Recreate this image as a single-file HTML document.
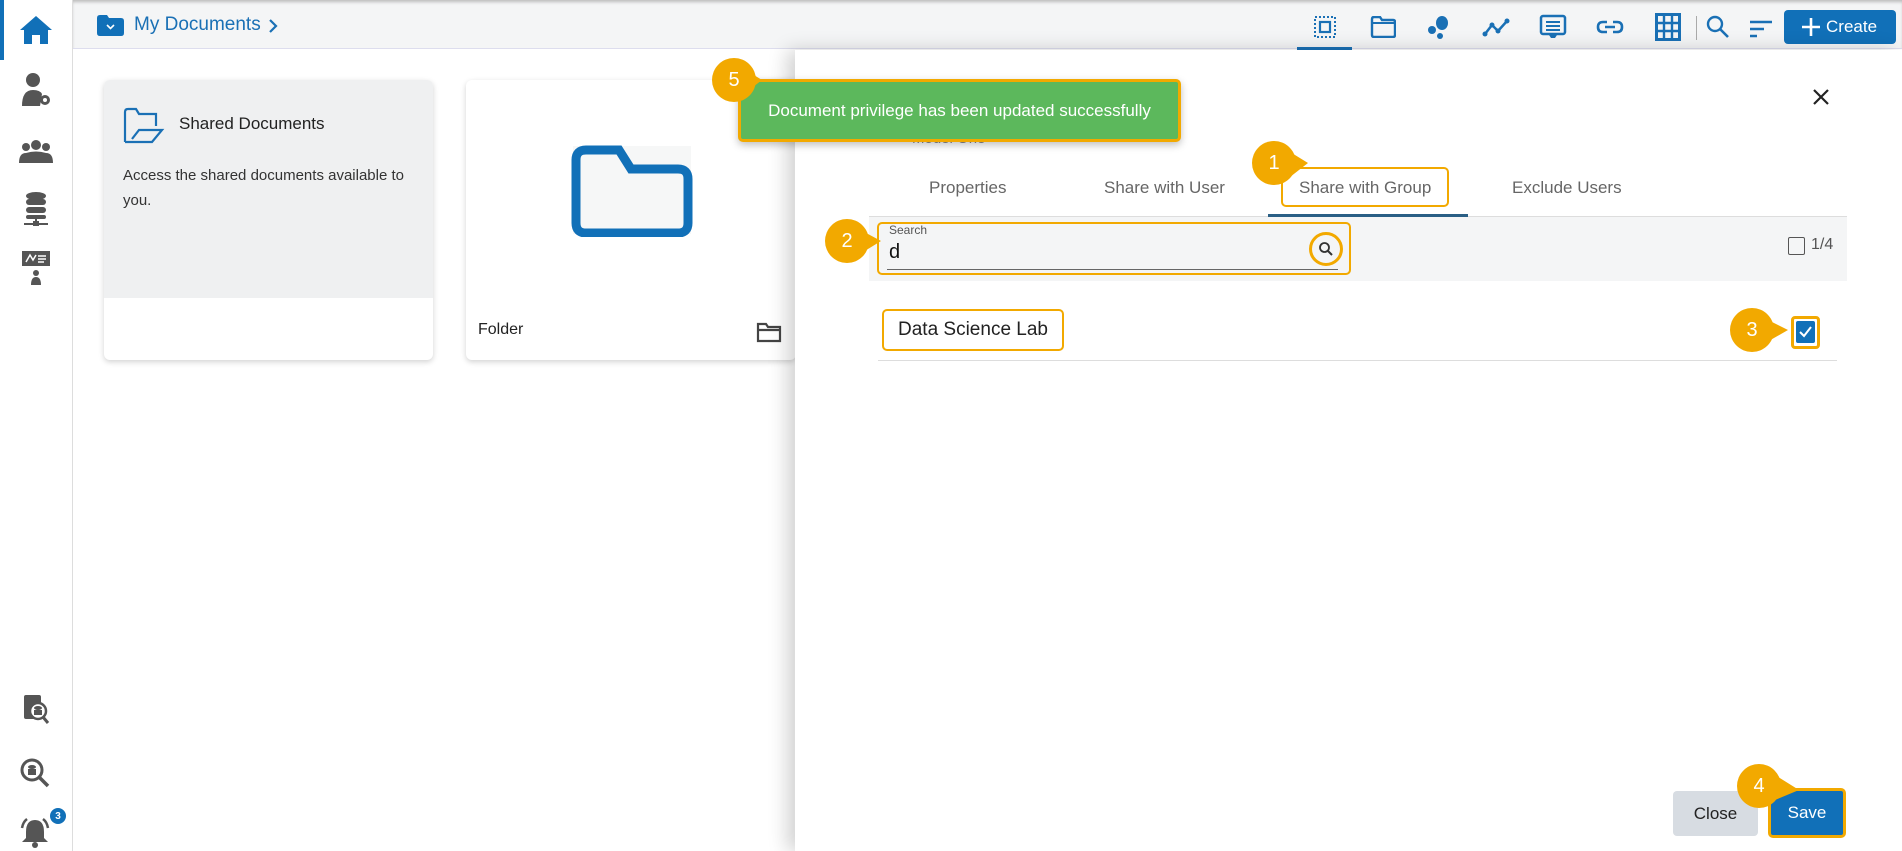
<!DOCTYPE html>
<html><head><meta charset="utf-8"><style>
*{box-sizing:border-box;margin:0;padding:0}
body{width:1902px;height:851px;overflow:hidden;background:#fff;font-family:"Liberation Sans",sans-serif;position:relative;color:#222}
.abs{position:absolute}
.side{left:0;top:0;width:73px;height:851px;background:#fff;border-right:1px solid #ddd}
.top{left:73px;top:0;width:1829px;height:49px;background:#f4f5f6;border-bottom:1px solid #dde;box-shadow:inset 0 3px 3px -1px #bbb}
.card{background:#fff;border-radius:6px;box-shadow:0 2px 6px rgba(0,0,0,.18);overflow:hidden}
.badge{width:44px;height:44px;border-radius:50%;background:#f2a900;color:#fff;font-size:20px;display:flex;align-items:center;justify-content:center}
.hl{border:2px solid #f2a900;border-radius:5px}
.ic{position:absolute;transform:translate(-50%,-50%)}
</style></head><body>
<div class="abs side"></div>
<div class="abs" style="left:0;top:0;width:4px;height:60px;background:#1170b8"></div>
<svg class="ic" style="left:36px;top:30px" width="34" height="32" viewBox="0 0 34 32"><path d="M17 2 L1 16 L5 16 L5 30 L13 30 L13 21 L21 21 L21 30 L29 30 L29 16 L33 16 Z" fill="#1170b8"/></svg>
<svg class="ic" style="left:36px;top:90px" width="32" height="36" viewBox="0 0 32 36"><circle cx="13" cy="8" r="7" fill="#555"/><path d="M2 34 Q2 18 13 18 Q20 18 22 22 L20 34Z" fill="#555"/><circle cx="25" cy="28" r="5" fill="#555"/><circle cx="25" cy="28" r="2" fill="#fff"/></svg>
<svg class="ic" style="left:36px;top:152px" width="36" height="26" viewBox="0 0 36 26"><circle cx="8" cy="8" r="4" fill="#555"/><circle cx="18" cy="6" r="5" fill="#555"/><circle cx="28" cy="8" r="4" fill="#555"/><path d="M1 24 Q1 14 8 14 Q18 11 28 14 Q35 14 35 24Z" fill="#555"/></svg>
<svg class="ic" style="left:36px;top:209px" width="26" height="36" viewBox="0 0 26 36"><ellipse cx="13" cy="5" rx="10" ry="4" fill="#555"/><rect x="3" y="8" width="20" height="6" rx="3" fill="#555"/><rect x="3" y="16" width="20" height="6" rx="3" fill="#555"/><rect x="3" y="24" width="20" height="4" rx="2" fill="#555"/><rect x="12" y="28" width="2" height="5" fill="#555"/><rect x="1" y="32" width="24" height="2" fill="#555"/><rect x="10" y="30" width="6" height="5" fill="#555"/></svg>
<svg class="ic" style="left:36px;top:268px" width="30" height="36" viewBox="0 0 30 36"><rect x="1" y="1" width="28" height="15" fill="#555"/><path d="M5 12 L9 5 L12 10 L15 5 M17 6 H25 M17 9 H25 M17 12 H23" stroke="#fff" stroke-width="1.5" fill="none"/><circle cx="15" cy="23" r="3" fill="#555"/><path d="M10 35 Q10 27 15 27 Q20 27 20 35Z" fill="#555"/></svg>
<svg class="ic" style="left:36px;top:710px" width="30" height="32" viewBox="0 0 30 32"><rect x="3" y="1" width="17" height="24" rx="2" fill="#555"/><circle cx="17" cy="17" r="8" fill="#fff" stroke="#555" stroke-width="2.5"/><ellipse cx="17" cy="14" rx="4" ry="2" fill="#555"/><rect x="13" y="16" width="8" height="5" fill="#555"/><path d="M22 23 L27 29" stroke="#555" stroke-width="3"/></svg>
<svg class="ic" style="left:35px;top:773px" width="32" height="32" viewBox="0 0 32 32"><circle cx="13" cy="13" r="10" fill="none" stroke="#555" stroke-width="3"/><ellipse cx="13" cy="10" rx="4" ry="2" fill="#555"/><rect x="9" y="12" width="8" height="6" fill="#555"/><path d="M20 20 L29 29" stroke="#555" stroke-width="3.5"/></svg>
<svg class="ic" style="left:35px;top:832px" width="34" height="32" viewBox="0 0 34 32"><path d="M17 4 Q8 4 8 16 L8 22 L4 26 L30 26 L26 22 L26 16 Q26 4 17 4Z" fill="#555"/><circle cx="17" cy="29" r="3" fill="#555"/><path d="M4 12 Q5 6 9 3 M30 12 Q29 6 25 3" stroke="#555" stroke-width="2.5" fill="none"/></svg>
<div class="abs" style="left:50px;top:808px;width:16px;height:16px;border-radius:50%;background:#1170b8;color:#fff;font-size:10px;font-weight:bold;display:flex;align-items:center;justify-content:center">3</div>

<div class="abs top"></div>
<svg class="abs" style="left:97px;top:15px" width="27" height="21" viewBox="0 0 27 21"><path d="M0 3 Q0 0 3 0 L10 0 L12 3 L24 3 Q27 3 27 6 L27 18 Q27 21 24 21 L3 21 Q0 21 0 18Z" fill="#1170b8"/><path d="M10 10 L13.5 13.5 L17 10" stroke="#fff" stroke-width="1.6" fill="none"/></svg>
<div class="abs" style="left:134px;top:14px;font-size:19px;color:#1a70b5">My Documents</div>
<svg class="abs" style="left:268px;top:19px" width="10" height="14" viewBox="0 0 10 14"><path d="M2 1 L8 7 L2 13" stroke="#1a70b5" stroke-width="2.2" fill="none"/></svg>
<svg class="ic" style="left:1325px;top:27px" width="24" height="24" viewBox="0 0 24 24"><rect x="2" y="2" width="20" height="20" fill="none" stroke="#1a70b5" stroke-width="2" stroke-dasharray="2 2"/><rect x="7" y="7" width="10" height="10" fill="none" stroke="#1a70b5" stroke-width="2.2"/></svg>
<div class="abs" style="left:1297px;top:47px;width:55px;height:3px;background:#1a70b5"></div>
<svg class="ic" style="left:1383px;top:27px" width="26" height="22" viewBox="0 0 26 22"><path d="M2 3 Q2 1 4 1 L10 1 L12 4 L23 4 Q25 4 25 6 L25 19 Q25 21 23 21 L4 21 Q2 21 2 19Z" fill="none" stroke="#1a70b5" stroke-width="2.4"/><path d="M2 7 L25 7" stroke="#1a70b5" stroke-width="2"/></svg>
<svg class="ic" style="left:1439px;top:27px" width="24" height="24" viewBox="0 0 24 24"><ellipse cx="15" cy="8" rx="6" ry="7" fill="#1a70b5"/><circle cx="5" cy="15" r="4" fill="#1a70b5"/><circle cx="13" cy="21" r="3" fill="#1a70b5"/></svg>
<svg class="ic" style="left:1496px;top:27px" width="28" height="20" viewBox="0 0 28 20"><path d="M3 17 L10 8 L16 14 L25 4" stroke="#1a70b5" stroke-width="2.5" fill="none"/><circle cx="3" cy="17" r="2.5" fill="#1a70b5"/><circle cx="10" cy="8" r="2.5" fill="#1a70b5"/><circle cx="16" cy="14" r="2.5" fill="#1a70b5"/><circle cx="25" cy="4" r="2.5" fill="#1a70b5"/></svg>
<svg class="ic" style="left:1553px;top:27px" width="28" height="26" viewBox="0 0 28 26"><rect x="2" y="2" width="24" height="18" rx="2" fill="none" stroke="#1a70b5" stroke-width="2.5"/><path d="M7 8 H21 M7 12 H21 M7 16 H21" stroke="#1a70b5" stroke-width="2"/><path d="M10 21 H18 L16 24 H12Z" fill="#1a70b5"/></svg>
<svg class="ic" style="left:1610px;top:27px" width="28" height="16" viewBox="0 0 28 16"><path d="M11 3 H7 Q2 3 2 8 Q2 13 7 13 H11 M17 3 H21 Q26 3 26 8 Q26 13 21 13 H17 M9 8 H19" stroke="#1a70b5" stroke-width="2.6" fill="none"/></svg>
<svg class="ic" style="left:1668px;top:27px" width="26" height="28" viewBox="0 0 26 28"><rect x="1.5" y="1.5" width="23" height="25" fill="none" stroke="#1a70b5" stroke-width="3"/><path d="M9 1 V27 M17 1 V27 M1 10 H25 M1 18 H25" stroke="#1a70b5" stroke-width="2.4"/></svg>
<div class="abs" style="left:1696px;top:16px;width:1px;height:24px;background:#aaa"></div>
<svg class="ic" style="left:1718px;top:27px" width="24" height="24" viewBox="0 0 24 24"><circle cx="9" cy="9" r="7" fill="none" stroke="#1a70b5" stroke-width="2.4"/><path d="M14 14 L22 22" stroke="#1a70b5" stroke-width="2.6"/></svg>
<svg class="ic" style="left:1761px;top:29px" width="24" height="20" viewBox="0 0 24 20"><path d="M1 3 H23 M1 10 H15 M1 17 H8" stroke="#1a70b5" stroke-width="2.6"/></svg>
<div class="abs" style="left:1784px;top:10px;width:112px;height:34px;background:#1170b8;border-radius:4px;color:#fff;font-size:17px;display:flex;align-items:center;padding-left:42px">Create</div>
<svg class="abs" style="left:1800px;top:16px" width="22" height="22" viewBox="0 0 22 22"><path d="M11 2 V20 M2 11 H20" stroke="#fff" stroke-width="2.6"/></svg>

<div class="abs card" style="left:104px;top:80px;width:329px;height:280px">
 <div style="height:218px;background:#eff0f1"></div>
</div>
<svg class="abs" style="left:122px;top:106px" width="44" height="38" viewBox="0 0 44 38"><path d="M3 36 L3 6 Q3 3 6 3 L14 3 L17 8 L34 8 L34 20 M3 36 L30 36 L40 24 L17 24 L10 33" stroke="#1a70b5" stroke-width="2.2" fill="none"/></svg>
<div class="abs" style="left:179px;top:114px;font-size:17px;color:#222">Shared Documents</div>
<div class="abs" style="left:123px;top:163px;font-size:15px;color:#333;line-height:25px;width:300px">Access the shared documents available to you.</div>
<div class="abs card" style="left:466px;top:80px;width:330px;height:280px"></div>
<div class="abs" style="left:573px;top:146px;width:118px;height:88px;background:#f6f7f7"></div>
<svg class="abs" style="left:571px;top:145px" width="122" height="92" viewBox="0 0 122 92"><path d="M5 15 Q5 5 15 5 L48 5 L60 24 L107 24 Q117 24 117 34 L117 78 Q117 88 107 88 L15 88 Q5 88 5 78Z" fill="none" stroke="#1170b8" stroke-width="9"/></svg>
<div class="abs" style="left:478px;top:321px;font-size:16px;color:#222">Folder</div>
<svg class="abs" style="left:756px;top:321px" width="26" height="22" viewBox="0 0 26 22"><path d="M2 3 L10 3 L12 6 L24 6 L24 20 L2 20Z M2 9 H24" fill="none" stroke="#444" stroke-width="2.2"/></svg>

<div class="abs" style="left:795px;top:50px;width:1107px;height:801px;background:#fff;box-shadow:-8px 0 18px rgba(0,0,0,.18)"></div>
<svg class="abs" style="left:1812px;top:88px" width="18" height="18" viewBox="0 0 18 18"><path d="M2 2 L16 16 M16 2 L2 16" stroke="#222" stroke-width="2.2"/></svg>
<div class="abs" style="left:912px;top:130px;font-size:15px;color:#888">Model One</div>
<div class="abs" style="left:869px;top:178px;width:978px;font-size:17px;color:#666">
 <span class="abs" style="left:60px;top:0">Properties</span>
 <span class="abs" style="left:235px;top:0">Share with User</span>
 <span class="abs" style="left:430px;top:0">Share with Group</span>
 <span class="abs" style="left:643px;top:0">Exclude Users</span>
</div>
<div class="abs hl" style="left:1281px;top:167px;width:168px;height:40px"></div>
<div class="abs" style="left:869px;top:216px;width:978px;height:1px;background:#ddd"></div>
<div class="abs" style="left:1268px;top:214px;width:200px;height:3px;background:#2a5f85"></div>
<div class="abs" style="left:869px;top:217px;width:978px;height:64px;background:#f4f5f6"></div>
<div class="abs hl" style="left:877px;top:222px;width:474px;height:53px"></div>
<div class="abs" style="left:889px;top:223px;font-size:12px;color:#555">Search</div>
<div class="abs" style="left:889px;top:241px;font-size:20px;color:#111">d</div>
<div class="abs" style="left:887px;top:269px;width:451px;height:1px;background:#666"></div>
<div class="abs" style="left:1309px;top:232px;width:34px;height:34px;border:3px solid #f2a900;border-radius:50%"></div>
<svg class="abs" style="left:1318px;top:241px" width="16" height="16" viewBox="0 0 16 16"><circle cx="6.5" cy="6.5" r="4.5" fill="none" stroke="#333" stroke-width="1.8"/><path d="M10 10 L14 14" stroke="#333" stroke-width="2"/></svg>
<div class="abs" style="left:1788px;top:237px;width:17px;height:18px;border:1.6px solid #555;border-radius:2px"></div>
<div class="abs" style="left:1811px;top:236px;font-size:16px;color:#555">1/4</div>
<div class="abs hl" style="left:882px;top:309px;width:182px;height:42px"></div>
<div class="abs" style="left:898px;top:319px;font-size:19px;color:#222">Data Science Lab</div>
<div class="abs" style="left:878px;top:360px;width:959px;height:1px;background:#ddd"></div>
<div class="abs" style="left:1791px;top:316px;width:29px;height:33px;border:3px solid #f2a900;border-radius:4px"></div>
<div class="abs" style="left:1796px;top:321px;width:19px;height:22px;background:#1170b8;border-radius:2px"></div>
<svg class="abs" style="left:1798px;top:324px" width="15" height="15" viewBox="0 0 15 15"><path d="M2 8 L6 12 L13 3" stroke="#fff" stroke-width="2" fill="none"/></svg>
<div class="abs" style="left:1673px;top:791px;width:85px;height:45px;background:#d7dce2;border-radius:4px;font-size:17px;color:#222;display:flex;align-items:center;justify-content:center">Close</div>
<div class="abs" style="left:1768px;top:788px;width:78px;height:50px;border:3px solid #f2a900;border-radius:5px;background:#1170b8;color:#fff;font-size:17px;display:flex;align-items:center;justify-content:center">Save</div>

<div class="abs" style="left:738px;top:79px;width:443px;height:63px;background:#5cb85c;border:3px solid #f2a900;border-radius:5px;box-shadow:0 3px 8px rgba(0,0,0,.25);color:#fff;font-size:17px;display:flex;align-items:center;justify-content:center">Document privilege has been updated successfully</div>

<svg class="abs" style="left:706px;top:58px" width="70" height="46"><path d="M30 6 L56 22 L38 36Z" fill="#f2a900"/></svg>
<div class="abs badge" style="left:712px;top:58px">5</div>
<svg class="abs" style="left:1252px;top:141px" width="70" height="46"><path d="M30 6 L56 22 L38 36Z" fill="#f2a900"/></svg>
<div class="abs badge" style="left:1252px;top:141px">1</div>
<svg class="abs" style="left:825px;top:219px" width="70" height="46"><path d="M30 8 L56 22 L30 38Z" fill="#f2a900"/></svg>
<div class="abs badge" style="left:825px;top:219px">2</div>
<svg class="abs" style="left:1730px;top:308px" width="70" height="46"><path d="M30 8 L58 22 L30 38Z" fill="#f2a900"/></svg>
<div class="abs badge" style="left:1730px;top:308px">3</div>
<svg class="abs" style="left:1737px;top:764px" width="70" height="46"><path d="M30 6 L62 26 L38 36Z" fill="#f2a900"/></svg>
<div class="abs badge" style="left:1737px;top:764px">4</div>
</body></html>
